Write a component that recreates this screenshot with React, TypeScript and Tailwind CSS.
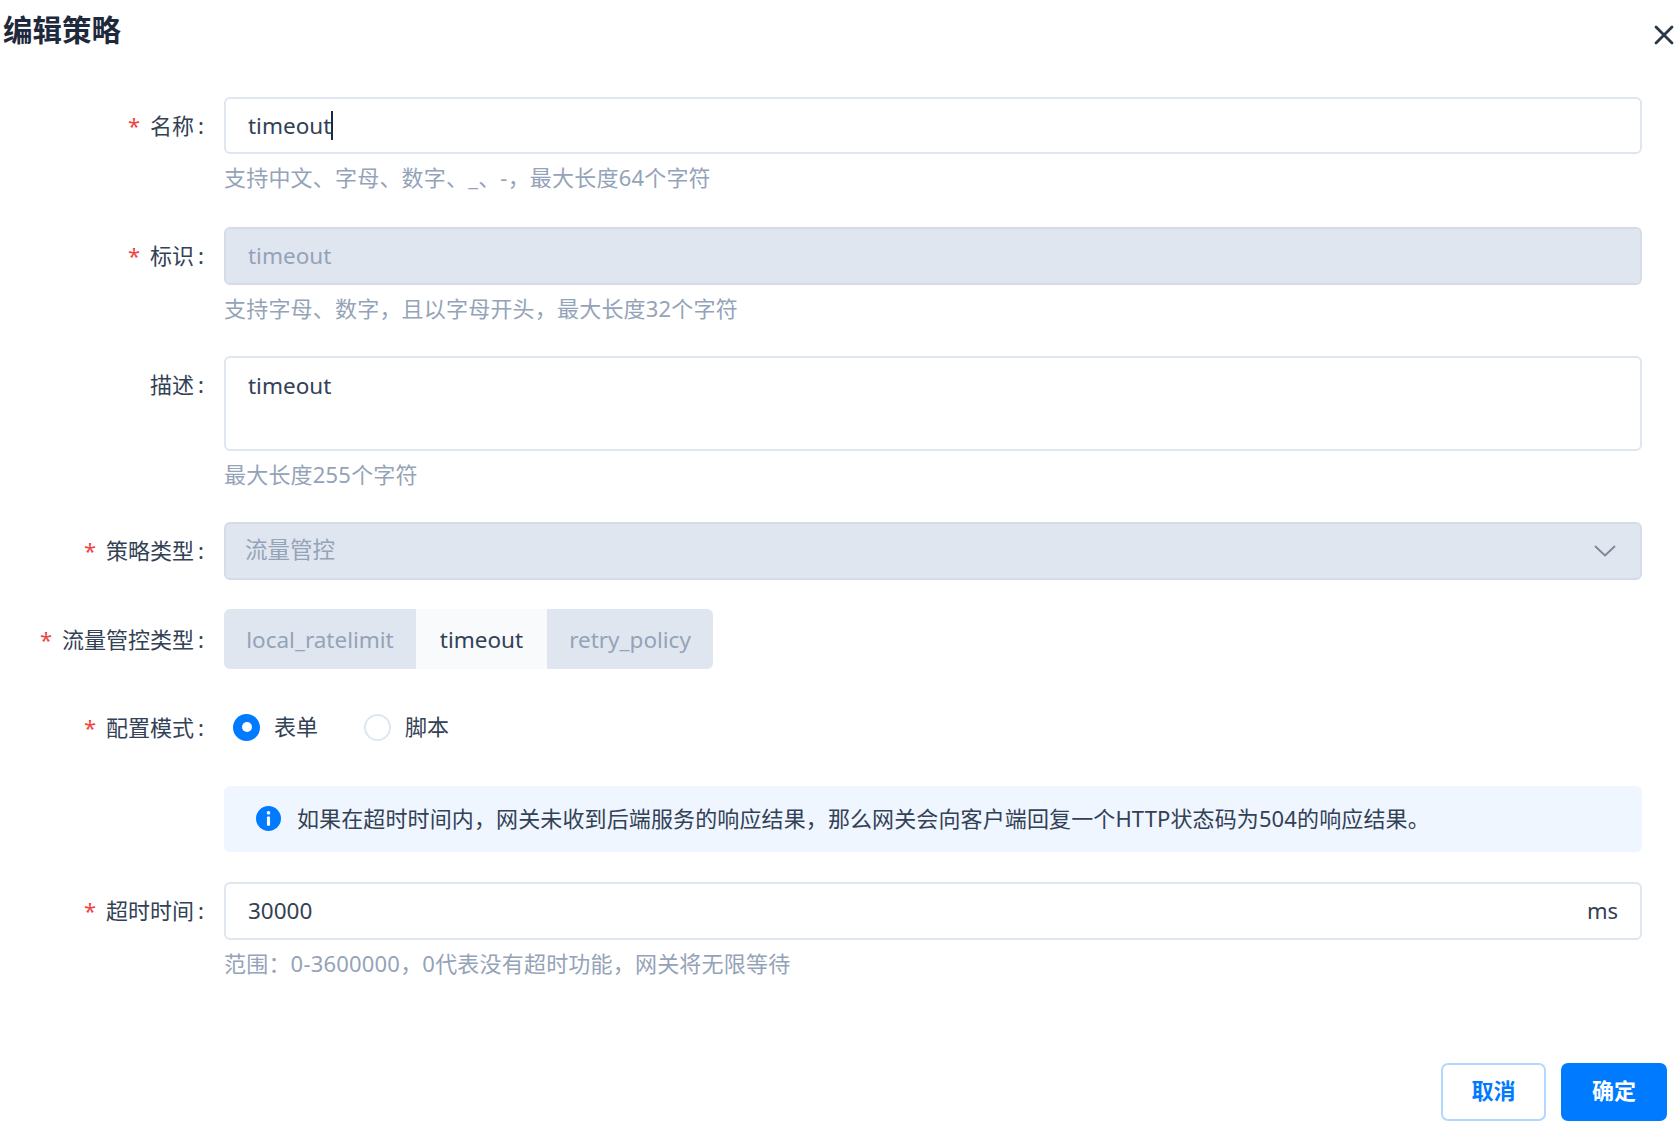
import React from "react";

const font = { fontFamily: '"Noto Sans", "Noto Sans CJK SC", sans-serif' };

const COMMA = "\uFF0C";
const COLON = "\uFF1A";

const hints = {
  name: `支持中文、字母、数字、_、-${COMMA}最大长度64个字符`,
  id: `支持字母、数字${COMMA}且以字母开头${COMMA}最大长度32个字符`,
  desc: "最大长度255个字符",
  timeout: `范围${COLON}0-3600000${COMMA}0代表没有超时功能${COMMA}网关将无限等待`,
};
const alertText = `如果在超时时间内${COMMA}网关未收到后端服务的响应结果${COMMA}那么网关会向客户端回复一个HTTP状态码为504的响应结果。`;

function Field({
  label,
  required = true,
  hint,
  children,
  className = "",
  labelClass = "leading-[56px] h-[56px]",
}: {
  label?: string;
  required?: boolean;
  hint?: string;
  children: React.ReactNode;
  className?: string;
  labelClass?: string;
}) {
  return (
    <div className={`flex ${className}`}>
      <div className={`w-[204px] shrink-0 flex justify-end text-[22px] text-[#334155] whitespace-nowrap ${labelClass}`}>
        {label && required && (
          <span className="text-[#ef4444] mr-[10px] text-[22px]">*</span>
        )}
        {label && <span>{label}<span className="ml-[4px]">:</span></span>}
      </div>
      <div className="ml-[20px] w-[1418px]">
        {children}
        {hint && (
          <div className="mt-[9px] mb-[1px] text-[22px] leading-[28px] tracking-[0.2px] text-[#94a3b8] whitespace-nowrap">
            {hint}
          </div>
        )}
      </div>
    </div>
  );
}

const boxBase =
  "flex items-center border-2 border-[#dfe6f0] rounded-[6px] text-[22.5px] px-[22px]";

export default function App() {
  return (
    <div className="relative w-[1680px] h-[1148px] bg-white overflow-hidden" style={font}>
      <div className="flex justify-between h-[97px]">
        <h1 className="ml-[3px] mt-[9px] text-[29.5px] leading-[42px] font-bold text-[#1e293b]">编辑策略</h1>
        <button className="mt-[25px] mr-[6px] w-[20px] h-[20px] text-[#2b3648]" aria-label="关闭">
          <svg viewBox="0 0 20 20" className="w-[20px] h-[20px]" fill="none" stroke="currentColor" strokeWidth="2.8" strokeLinecap="round">
            <path d="M2 2 L18 18 M18 2 L2 18" />
          </svg>
        </button>
      </div>

      <Field label="名称" hint={hints.name} className="mb-[35px]">
        <div className={`${boxBase} h-[57px] text-[#334155]`}>
          <span>timeout</span>
          <span className="w-[2px] h-[29px] bg-[#1e293b]" />
        </div>
      </Field>

      <Field label="标识" hint={hints.id} className="mb-[33px]">
        <div className={`${boxBase} h-[58px] bg-[#e0e6ef] !border-[#d5dce7] text-[#94a3b8]`}>timeout</div>
      </Field>

      <Field label="描述" required={false} hint={hints.desc} className="mb-[33px]">
        <div className={`${boxBase} h-[95px] items-start pt-[13px] leading-[30px] text-[#334155]`}>timeout</div>
      </Field>

      <Field label="策略类型" className="mb-[29px]">
        <div className={`${boxBase} !px-[19px] h-[58px] justify-between bg-[#e0e6ef] !border-[#d5dce7] text-[#94a3b8]`}>
          <span className="mb-[3px]">流量管控</span>
          <svg viewBox="0 0 22 12" className="w-[22px] h-[12px] mr-[5px] text-[#7c8799]" fill="none" stroke="currentColor" strokeWidth="1.8" strokeLinecap="round" strokeLinejoin="round">
            <path d="M1.5 1.5 L11 10.5 L20.5 1.5" />
          </svg>
        </div>
      </Field>

      <Field label="流量管控类型" className="mb-[29px]" labelClass="leading-[60px] h-[60px]">
        <div className="flex h-[60px] text-[22.5px]">
          <div className="w-[192px] pt-[2px] flex items-center justify-center bg-[#e0e6ef] text-[#94a3b8] rounded-l-[6px]">local_ratelimit</div>
          <div className="w-[131px] pt-[2px] flex items-center justify-center bg-[#f8fafc] text-[#334155]">timeout</div>
          <div className="w-[166px] pt-[2px] flex items-center justify-center bg-[#e0e6ef] text-[#94a3b8] rounded-r-[6px]">retry_policy</div>
        </div>
      </Field>

      <Field label="配置模式" className="mb-[30px]" labelClass="leading-[58px] h-[58px]">
        <div className="flex items-center h-[58px] text-[22px] text-[#334155]">
          <span className="ml-[9px] w-[27px] h-[27px] rounded-full bg-[#007bff] flex items-center justify-center">
            <span className="w-[10px] h-[10px] rounded-full bg-white" />
          </span>
          <span className="ml-[14px] mb-[1px]">表单</span>
          <span className="ml-[46px] w-[27px] h-[27px] rounded-full border-2 border-[#dfe6f0] bg-white" />
          <span className="ml-[14px] mb-[1px]">脚本</span>
        </div>
      </Field>

      <Field className="mb-[30px]">
        <div className="flex items-center h-[66px] pb-[1px] bg-[#eff6ff] rounded-[6px] pl-[32px] text-[22px] tracking-[0.12px] text-[#334155] whitespace-nowrap">
          <svg viewBox="0 0 24 24" className="w-[25px] h-[25px] shrink-0">
            <circle cx="12" cy="12" r="12" fill="#007bff" />
            <circle cx="12" cy="6.6" r="1.7" fill="#fff" />
            <rect x="10.5" y="10" width="3" height="9" rx="1" fill="#fff" />
          </svg>
          <span className="ml-[16px]">{alertText}</span>
        </div>
      </Field>

      <Field label="超时时间" hint={hints.timeout}>
        <div className={`${boxBase} h-[58px] justify-between text-[#334155]`}>
          <span>30000</span>
          <span className="text-[22px] mb-[2px]">ms</span>
        </div>
      </Field>

      <div className="flex justify-end gap-[15px] mt-[85px] pr-[13px]">
        <button className="w-[105px] h-[58px] pb-[4px] rounded-[7px] border-2 border-[#b3d7ff] bg-white text-[#007bff] text-[22px] font-bold">取消</button>
        <button className="w-[106px] h-[58px] pb-[4px] rounded-[7px] bg-[#007bff] text-white text-[22px] font-bold">确定</button>
      </div>
    </div>
  );
}
